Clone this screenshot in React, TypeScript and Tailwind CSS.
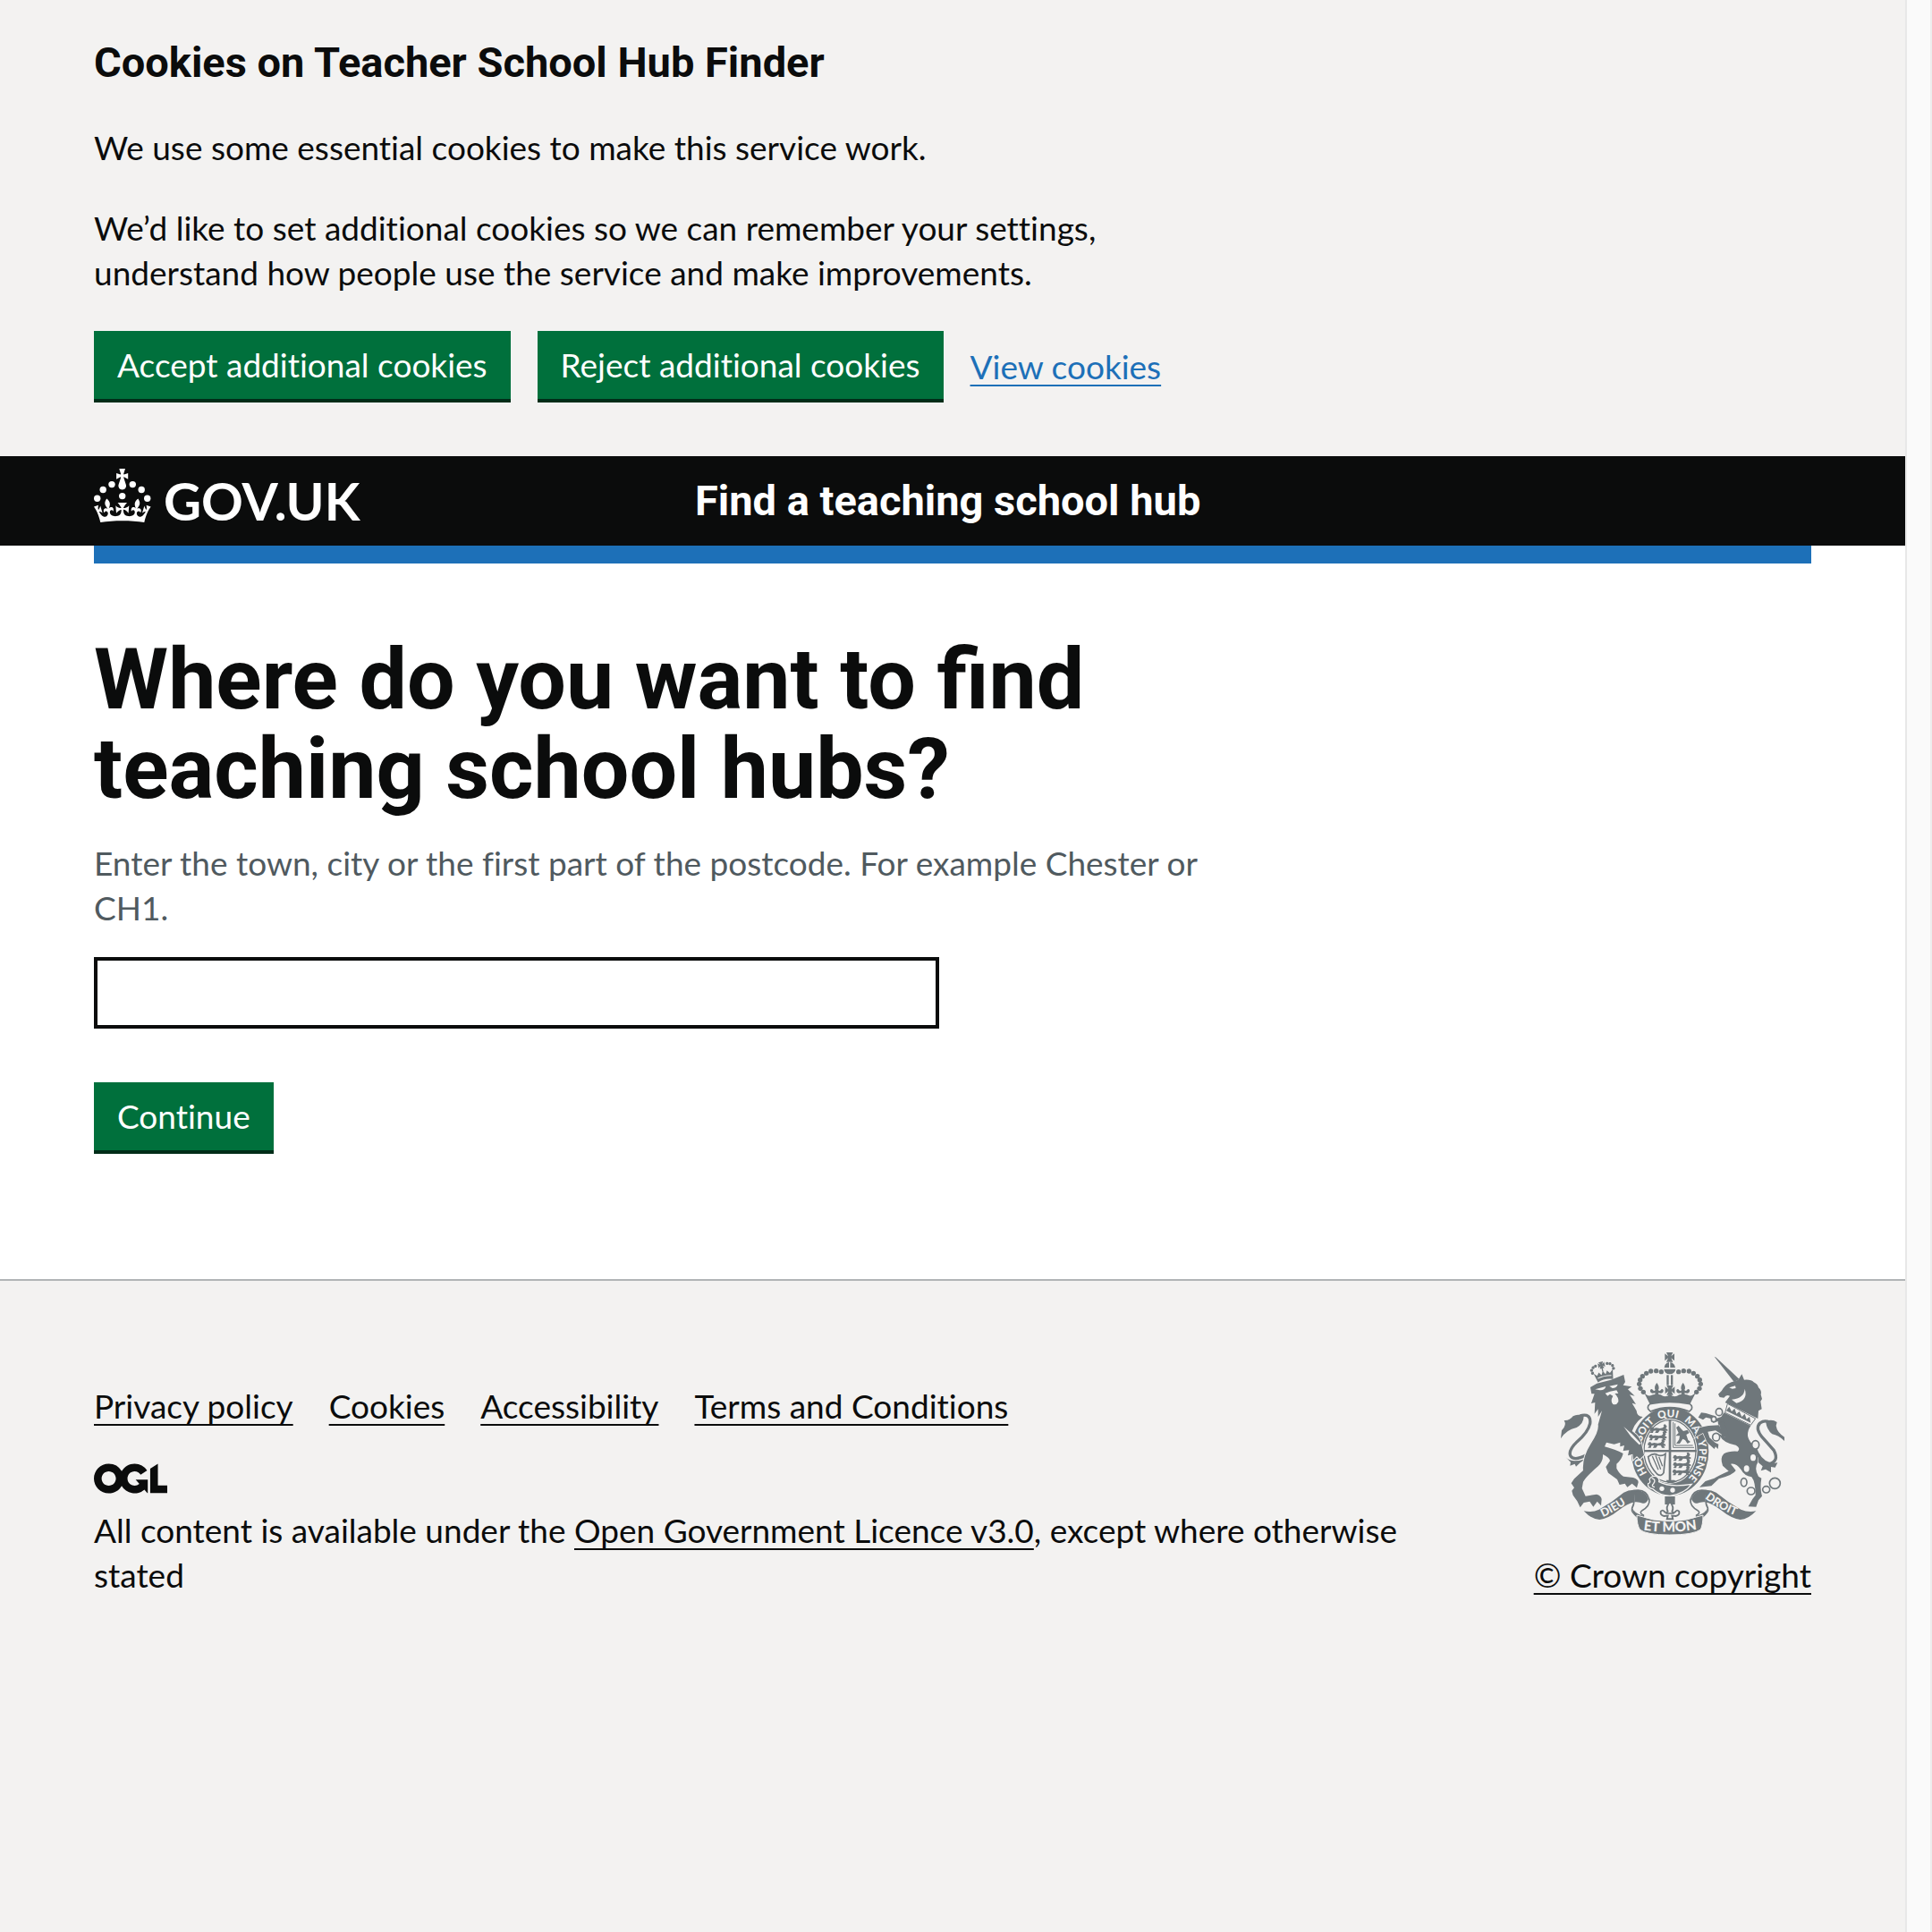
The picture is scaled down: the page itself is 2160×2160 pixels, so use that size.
import type { ReactNode } from "react";

const footerLinks = ["Privacy policy", "Cookies", "Accessibility", "Terms and Conditions"];

function Button({ children, type = "button" }: { children: ReactNode; type?: "button" | "submit" }) {
  return (
    <button
      type={type}
      className="h-20 cursor-pointer border-b-4 border-[#002d18] bg-[#00703c] px-[26px] pb-px text-white"
    >
      {children}
    </button>
  );
}

function CrownIcon() {
  return (
    <svg viewBox="0 0 64 60" className="h-[60px] w-16 fill-current" aria-hidden="true">
      <circle cx="20" cy="17.6" r="3.7" />
      <circle cx="10.2" cy="23.5" r="3.7" />
      <circle cx="3.7" cy="33.2" r="3.7" />
      <circle cx="31.7" cy="30.6" r="3.7" />
      <circle cx="43.3" cy="17.6" r="3.7" />
      <circle cx="53.2" cy="23.5" r="3.7" />
      <circle cx="59.7" cy="33.2" r="3.7" />
      <path d="M33.1,9.8c.2-.1.3-.3.5-.5l4.6,2.4v-6.8l-4.6,1.5c-.1-.2-.3-.3-.5-.5l1.9-5.9h-6.7l1.9,5.9c-.2.1-.3.3-.5.5l-4.6-1.5v6.8l4.6-2.4c.1.2.3.3.5.5l-2.6,8c-.9,2.8,1.2,5.7,4.1,5.7h0c3,0,5.1-2.9,4.1-5.7l-2.6-8ZM37,37.9s-3.4,3.8-4.1,6.1c2.2,0,4.2-.5,6.4-2.8l-.7,8.5c-2-2.8-4.4-4.1-5.7-3.8.1,3.1.5,6.7,5.8,7.2,3.7.3,6.7-1.5,7-3.8.4-2.6-2-4.3-3.7-1.6-1.4-4.5,2.4-6.1,4.9-3.2-1.9-4.5-1.8-7.7,2.4-10.9,3,4,2.6,7.3-1.2,11.1,2.4-1.3,6.2,0,4,4.6-1.2-2.8-3.7-2.2-4.2.2-.3,1.7.7,3.7,3,4.2,1.9.3,4.7-.9,7-5.9-1.3,0-2.4.7-3.9,1.7l2.4-8c.6,2.3,1.4,3.7,2.2,4.5.6-1.6.5-2.8,0-5.3l5,1.8c-2.6,3.6-5.2,8.7-7.3,17.5-7.4-1.1-15.7-1.7-24.5-1.7h0c-8.8,0-17.1.6-24.5,1.7-2.1-8.9-4.7-13.9-7.3-17.5l5-1.8c-.5,2.5-.6,3.7,0,5.3.8-.8,1.6-2.3,2.2-4.5l2.4,8c-1.5-1-2.6-1.7-3.9-1.7,2.3,5,5.2,6.2,7,5.9,2.3-.4,3.3-2.4,3-4.2-.5-2.4-3-3.1-4.2-.2-2.2-4.6,1.6-6,4-4.6-3.7-3.7-4.2-7.1-1.2-11.1,4.2,3.2,4.3,6.4,2.4,10.9,2.5-2.8,6.3-1.3,4.9,3.2-1.8-2.7-4.1-1-3.7,1.6.3,2.3,3.3,4.1,7,3.8,5.4-.5,5.7-4.2,5.8-7.2-1.3-.2-3.7,1-5.7,3.8l-.7-8.5c2.2,2.3,4.2,2.7,6.4,2.8-.7-2.3-4.1-6.1-4.1-6.1h10.6Z" />
    </svg>
  );
}

function OglLogo() {
  return (
    <svg viewBox="0 0 483.2 195.7" className="mt-[39px] mb-4 h-[34px] w-[82px] fill-current" aria-hidden="true">
      <path d="M421.5 142.8V.1l-50.7 32.3v161.1h112.4v-50.7zm-122.3-9.6A47.12 47.12 0 0 1 221 97.8c0-26 21.1-47.1 47.1-47.1 16.7 0 31.4 8.7 39.7 21.8l42.7-27.2A97.63 97.63 0 0 0 268.1 0c-36.5 0-68.3 20.1-85.1 49.7A98 98 0 0 0 97.8 0C43.9 0 0 43.9 0 97.8s43.9 97.8 97.8 97.8c36.5 0 68.3-20.1 85.1-49.7a97.76 97.76 0 0 0 149.6 25.4l19.4 22.2h3v-87.8h-80l24.3 27.5zM97.8 145c-26 0-47.1-21.1-47.1-47.1s21.1-47.1 47.1-47.1 47.1 21.1 47.1 47.1S123.8 145 97.8 145" />
    </svg>
  );
}

const ink = "#6f777b";
const paper = "#f3f2f1";
const crossPattee = "M-16-12 L-5-3 L-11-16 H11 L5-3 L16-12 V12 L5 3 L11 16 H-11 L-5 3 L-16 12Z";
const fleur =
  "M0-20 Q11-6 5 4 Q8 9 13 5 Q17-2 22 4 Q24 13 14 15 L5 14 L7 22 H-7 L-5 14 L-14 15 Q-24 13 -22 4 Q-17-2 -13 5 Q-8 9 -5 4 Q-11-6 0-20Z";
const archDots = [
  [412, 131], [395, 128], [377, 129], [362, 136], [349, 146], [341, 158], [338, 172], [342, 187], [352, 199],
];
const lionCrownDots = [
  [-35, -2], [-36, -12], [-29, -20], [-20, -23], [20, -23], [29, -20], [36, -12], [37, -2],
];
const passant =
  "M0 10 L3 2 L9 0 L14 5 L22 3 L34 5 L44 3 L48 -2 L46 -7 L52 -9 L58 -2 L54 6 L60 8 L60 14 L54 12 L58 20 L48 20 L45 13 L34 12 L28 20 L18 20 L22 12 L13 13 L11 20 L1 20 L6 13Z";

function Ribbon() {
  return (
    <>
      <path
        d="M320 530 Q362 522 372 560 Q374 582 348 596 Q336 604 352 612 L352 660 Q334 650 334 618 Q310 604 314 588 Q322 574 320 562Z"
        fill={paper}
        stroke={ink}
        strokeWidth="5"
      />
      <path d="M322 528 Q360 526 369 558 Q362 574 350 572 Q336 566 322 568Z" fill={ink} />
      <path
        d="M152 598 Q178 604 203 593 Q248 568 286 536 Q306 524 332 528 Q318 545 322 568 Q298 574 268 596 Q236 622 205 627 Q178 626 152 598Z"
        fill={ink}
      />
      <path d="M313 585 Q320 606 352 614 L350 664 Q334 656 331 622 Q316 606 313 585Z" fill={ink} />
    </>
  );
}

function RoyalArms() {
  return (
    <svg
      viewBox="75 66 750 612"
      className="h-[204px] w-[250px] font-[Lato,sans-serif] font-black"
      role="img"
      aria-label="Royal coat of arms"
    >
      <defs>
        <path id="garter" d="M441 513 A98 115 0 0 1 441 283 A98 115 0 0 1 441 513" />
        <path id="dieu" d="M216 618 Q262 598 320 556" />
        <path id="droit" d="M558 555 Q610 596 676 619" />
        <path id="etmon" d="M354 662 Q440 674 530 660" />
      </defs>

      {/* lion tail */}
      <g fill={ink}>
        <path d="M138 279 Q178 268 173 305 Q166 335 130 365 Q98 396 108 414 Q122 432 164 408" fill="none" stroke={ink} strokeWidth="10" />
        <path d="M75 355 L78 328 Q96 310 86 294 Q104 296 116 280 Q132 270 152 280 Q152 305 128 318 Q92 326 75 355Z" />
        <path d="M92 418 Q112 440 160 422 L140 436 L126 449 L122 440 L106 446 L108 434Z" />
      </g>

      {/* unicorn tail */}
      <g fill={ink}>
        <path d="M726 385 Q742 432 775 440 Q808 430 790 395 Q770 372 750 350 Q726 320 743 303 Q758 292 775 300" fill="none" stroke={ink} strokeWidth="10" />
        <path d="M762 297 Q784 288 800 300 L797 312 Q800 334 825 350 V363 Q805 344 784 340 Q766 326 762 297Z" />
        <path d="M735 405 Q745 432 770 440 L802 436 L794 452 L780 450 L780 469 L762 458 L746 463 L752 448 L738 436Z" />
      </g>

      {/* garter */}
      <ellipse cx="441" cy="398" rx="130" ry="149" fill={ink} />
      <ellipse cx="441" cy="397" rx="92" ry="109" fill={paper} />
      <ellipse cx="441" cy="397" rx="87" ry="104" fill="none" stroke={ink} strokeWidth="4" />
      <g fill={paper} fontSize="35">
        <text><textPath href="#garter" startOffset="90">HO</textPath></text>
        <text><textPath href="#garter" startOffset="200">SOIT</textPath></text>
        <text><textPath href="#garter" startOffset="296">QUI</textPath></text>
        <text><textPath href="#garter" startOffset="384">MAL Y</textPath></text>
        <text><textPath href="#garter" startOffset="492">PENSE</textPath></text>
      </g>

      {/* shield quarters */}
      <g fill={ink}>
        <rect x="437" y="292" width="8" height="206" />
        <rect x="354" y="393" width="176" height="7" />
        <path d={passant} transform="translate(373 316)" />
        <path d={passant} transform="translate(370 341)" />
        <path d={passant} transform="translate(366 366)" />
        <path d={passant} transform="translate(451 410)" />
        <path d={passant} transform="translate(451 434)" />
        <path d={passant} transform="translate(449 458)" />
        <path d="M462 318 L470 312 L478 322 L486 330 L500 326 L506 336 L496 342 L502 360 L510 366 L500 372 L492 360 L484 356 L474 372 L462 372 L472 358 L474 346 L460 346 L470 336Z" />
      </g>
      <path d="M452 300 V385 H522 M458 304 V378 H518" fill="none" stroke={ink} strokeWidth="3" />
      <g fill="none" stroke={ink} strokeWidth="5">
        <path d="M368 416 Q385 402 400 410 Q414 416 426 406 L420 470 Q412 484 398 474 Q374 450 368 416Z" />
        <path d="M382 414 L402 460 M393 412 L410 458 M404 416 L416 448" strokeWidth="4" />
      </g>

      {/* buckle and strap */}
      <path d="M372 492 Q380 478 396 482 Q408 490 404 500 Q440 520 514 508 Q490 540 441 547 Q405 545 384 524 Q364 520 368 506 Q378 504 372 492Z" fill={ink} stroke={paper} strokeWidth="4" />
      <path d="M380 488 Q396 492 386 506 Q376 514 390 518" fill="none" stroke={paper} strokeWidth="4" />
      <path d="M428 494 H456 L464 500 L450 504 H434Z" fill={ink} />
      <circle cx="414" cy="523" r="8" fill={paper} />
      <circle cx="450" cy="528" r="8" fill={paper} />

      {/* imperial crown */}
      <g fill={ink}>
        <path d={crossPattee} transform="translate(440 82)" />
        <path d="M422 117 Q424 100 440 98 Q456 100 459 117Z" />
        <path d="M438 98 H442 V118 H438Z" fill={paper} />
        <path d="M421 122 H460 Q458 138 440 139 Q423 138 421 122Z" />
        <rect x="430" y="142" width="7" height="34" />
        <rect x="444" y="142" width="7" height="34" />
        {archDots.map(([x, y]) => (
          <g key={x}>
            <circle cx={x} cy={y} r="8" />
            <circle cx={882 - x} cy={y} r="8" />
          </g>
        ))}
        <path d={crossPattee} transform="translate(441 193)" />
        <path d={fleur} transform="translate(397 188)" />
        <path d={fleur} transform="translate(485 188)" />
        <path d="M353 198 Q366 218 384 208 Q397 204 410 208 Q426 220 441 206 Q456 220 472 208 Q485 204 498 208 Q514 218 529 198 L508 240 Q440 226 374 240Z" />
      </g>
      <path d="M378 238 Q440 226 504 238 Q518 243 514 256 L506 264 Q440 238 376 264 L368 256 Q364 243 378 238Z" fill={paper} stroke={ink} strokeWidth="5" />

      {/* lion */}
      <path
        d="M174 183 L196 170 L243 158 L286 141 L291 165 L284 176 L313 181 L300 190 L323 212 L306 208 L327 240 L314 236 L329 262 Q330 282 350 282 L334 296 L322 312 L314 330 Q345 350 348 385 L354 410 L340 424 L330 414 L318 426 L316 407 L300 412 L304 394 L284 396 L288 378 L274 382 L274 368 L254 374 L228 368 L222 382 Q258 392 284 405 Q280 425 262 440 L262 455 Q272 474 285 482 L318 486 Q336 492 335 502 L330 520 L314 506 L298 518 L290 506 L272 510 L264 492 L234 470 L226 450 L240 430 Q238 418 216 408 Q218 430 200 448 Q160 482 150 500 L146 522 L158 548 L195 542 Q210 546 212 558 L210 580 L197 566 L184 584 L172 566 L152 570 L140 586 L130 565 L116 545 L112 530 L120 520 L110 505 L120 490 L150 462 Q146 420 176 372 Q204 330 200 308 L213 262 L200 282 L200 256 L188 272 L190 234 L177 237 L188 205 L178 205Z"
        fill={ink}
        stroke={paper}
        strokeWidth="6"
        paintOrder="stroke"
      />
      <g fill={paper}>
        <path d="M190 190 L226 180 Q222 194 206 193Z" />
        <path d="M238 179 L266 173 Q262 186 248 186Z" />
        <path d="M224 203 L240 197 L262 193 L268 203 L256 204 Q270 218 268 232 Q262 244 250 240 Q240 230 250 212 L240 206 L232 212Z" />
        <path d="M286 315 L316 342 L344 372 L338 376 L310 348Z" />
      </g>

      {/* lion crown */}
      <g fill={ink} transform="translate(216 130) rotate(-13)">
        <path d="M-32 0 L-22 10 L-14 0 L-7 11 L0-2 L7 11 L14 0 L22 10 L34 0 L28 32 Q0 22 -24 32Z" />
        <path d="M-22 19 Q0 13 25 19" fill="none" stroke={paper} strokeWidth="3" />
        <path d={crossPattee} transform="translate(0 -22) scale(.7)" />
        {lionCrownDots.map(([x, y]) => (
          <circle key={x} cx={x} cy={y} r="5" />
        ))}
        <rect x="-2" y="-14" width="4" height="14" />
      </g>

      {/* unicorn */}
      <g fill={ink}>
        <path d="M590 80 L596 83 L674 156 L656 165Z" />
        <path d="M603 206 Q616 196 620 186 Q632 168 660 162 L670 158 L682 139 L690 158 Q714 156 722 166 Q736 172 738 184 Q750 194 746 208 L750 222 L745 230 L749 256 L738 262 L736 288 L634 238 L626 234 L642 212 Q630 206 622 218 L608 216Z" />
        <path d="M622 268 L712 312 Q690 345 716 372 Q738 400 736 434 Q722 455 738 482 L748 488 Q742 520 750 548 L738 562 L730 584 L704 583 L718 558 L728 545 Q728 500 715 484 Q690 480 680 460 Q664 436 645 440 L662 462 Q655 476 605 490 L580 514 L540 518 L560 498 L590 488 Q606 478 638 464 L618 446 Q608 420 622 406 Q640 396 668 398 Q680 388 662 377 Q620 370 608 345 L602 300Z" />
        <path d="M618 300 L600 298 L586 302 L578 288 L562 284 L552 292 L536 284 L546 268 L562 270 L588 278 L596 288 L620 280Z" />
        <path
          d="M622 346 L594 328 L568 332 L574 352 L592 368 L604 374 L602 390 L594 382 L590 390 L566 368 L552 336 L524 352 L540 318 L570 312 L606 310Z"
          stroke={paper}
          strokeWidth="4"
          paintOrder="stroke"
        />
        <path d="M606 304 L624 300 L640 350 L616 350Z" />
      </g>
      <g fill={paper}>
        <path d="M640 184 L660 178 L662 186 L650 188Z" />
        <path d="M648 224 Q690 220 692 188 Q704 226 664 236Z" />
        <path d="M634 238 L728 288 L712 310 L626 268Z" stroke={ink} strokeWidth="3" />
      </g>
      <path d="M634 256 L640 248 L648 264 L658 254 L664 272 L674 264 L682 282 L692 272 L698 290 L708 282 L712 302 L630 262Z" fill={ink} />
      <g fill={paper}>
        <ellipse cx="720" cy="419" rx="9" ry="11" />
        <ellipse cx="698" cy="456" rx="9" ry="11" />
        <g stroke={ink} strokeWidth="5">
          <ellipse cx="606" cy="266" rx="11" ry="12" />
          <ellipse cx="588" cy="290" rx="8" ry="9" />
          <ellipse cx="596" cy="350" rx="12" ry="13" />
          <ellipse cx="728" cy="376" rx="12" ry="14" />
          <ellipse cx="689" cy="502" rx="10" ry="14" />
          <ellipse cx="713" cy="531" rx="13" ry="12" />
          <ellipse cx="764" cy="526" rx="12" ry="11" />
          <circle cx="793" cy="505" r="18" fill="none" />
        </g>
      </g>

      {/* motto ribbons */}
      <Ribbon />
      <g transform="translate(882 0) scale(-1 1)">
        <Ribbon />
      </g>
      <path d="M330 612 Q440 652 552 612 Q552 644 544 660 Q520 678 440 678 Q360 678 340 660 Q330 644 330 612Z" fill={ink} stroke={paper} strokeWidth="3" />
      <g fill={paper} fontSize="38">
        <text><textPath href="#dieu">DIEU</textPath></text>
        <text><textPath href="#droit">DROIT</textPath></text>
        <text fontSize="46"><textPath href="#etmon" startOffset="50%" textAnchor="middle">ET MON</textPath></text>
      </g>

      {/* pendant fleur-de-lis */}
      <path d="M424 549 H458 V576 H424Z" fill={ink} />
      <path d={fleur} transform="translate(441 594) scale(1.4)" fill={paper} stroke={ink} strokeWidth="4" />
      <path d="M427 606 H455" stroke={ink} strokeWidth="5" />
    </svg>
  );
}

const footerLink = "underline decoration-2 underline-offset-[6px] [text-decoration-skip-ink:none]";

export default function App() {
  return (
    <div className="flex min-h-screen bg-[#f3f2f1] font-[Lato,sans-serif] text-[37px] leading-[50px] text-[#0b0c0c] [font-variant-ligatures:none]">
      <div className="flex min-w-0 flex-1 flex-col">
        <section aria-label="Cookies on Teacher School Hub Finder" className="px-[30px] pt-10 pb-[60px]">
          <div className="mx-auto max-w-[1920px]">
            <div className="flex max-w-[1260px] flex-col gap-10">
              <h2 className="font-[Roboto,sans-serif] text-[47px] leading-[60px] font-bold">
                Cookies on Teacher School Hub Finder
              </h2>
              <p>We use some essential cookies to make this service work.</p>
              <p>
                We’d like to set additional cookies so we can remember your settings, understand how people use the
                service and make improvements.
              </p>
              <div className="flex flex-wrap items-center gap-[30px]">
                <Button>Accept additional cookies</Button>
                <Button>Reject additional cookies</Button>
                <a href="#cookies" className="text-[#1d70b8] underline decoration-2 underline-offset-[6px]">
                  View cookies
                </a>
              </div>
            </div>
          </div>
        </section>

        <header className="bg-[#0b0c0c] px-[30px] text-white">
          <div className="mx-auto flex h-[100px] max-w-[1920px] items-center">
            <a href="#home" className="flex w-1/3 items-center gap-[14px]">
              <span className="-mt-3">
                <CrownIcon />
              </span>
              <span className="text-[58px] leading-[60px] font-bold">GOV.UK</span>
            </a>
            <a href="#service" className="pl-8 font-[Roboto,sans-serif] text-[47px] leading-[60px] font-bold">
              Find a teaching school hub
            </a>
          </div>
        </header>

        <main className="bg-white px-[30px] pb-[140px]">
          <div className="mx-auto max-w-[1920px] border-t-[20px] border-[#1d70b8] pt-20">
            <form className="flex max-w-[1260px] flex-col items-start" onSubmit={(e) => e.preventDefault()}>
              <h1 className="font-[Roboto,sans-serif] text-[95px] leading-[100px] font-bold [font-variant-ligatures:normal]">
                <label htmlFor="location">Where do you want to find teaching school hubs?</label>
              </h1>
              <p id="location-hint" className="mt-[30px] text-[#505a5f]">
                Enter the town, city or the first part of the postcode. For example Chester or CH1.
              </p>
              <input
                id="location"
                type="text"
                aria-describedby="location-hint"
                className="mt-[30px] mb-[60px] h-20 w-3/4 border-4 border-[#0b0c0c] bg-white px-2"
              />
              <Button type="submit">Continue</Button>
            </form>
          </div>
        </main>

        <footer className="flex-1 border-t-2 border-[#b1b4b6] px-[30px] pt-20">
          <div className="mx-auto flex max-w-[1920px] items-end justify-between gap-[60px]">
            <div className="min-w-0 flex-1">
              <ul className="flex flex-wrap gap-x-10">
                {footerLinks.map((label) => (
                  <li key={label}>
                    <a href="#footer" className={footerLink}>
                      {label}
                    </a>
                  </li>
                ))}
              </ul>
              <OglLogo />
              <p>
                All content is available under the{" "}
                <a href="#licence" className={footerLink}>
                  Open Government Licence v3.0
                </a>
                , except where otherwise stated
              </p>
            </div>
            <a href="#copyright" className="flex flex-col items-center gap-5">
              <RoyalArms />
              <span className={footerLink}>© Crown copyright</span>
            </a>
          </div>
        </footer>
      </div>
      <div
        aria-hidden="true"
        className="w-[30px] border-r-2 border-l-2 border-r-[#ededed] border-l-[#e8e8e8] bg-[#fafafa]"
      />
    </div>
  );
}
